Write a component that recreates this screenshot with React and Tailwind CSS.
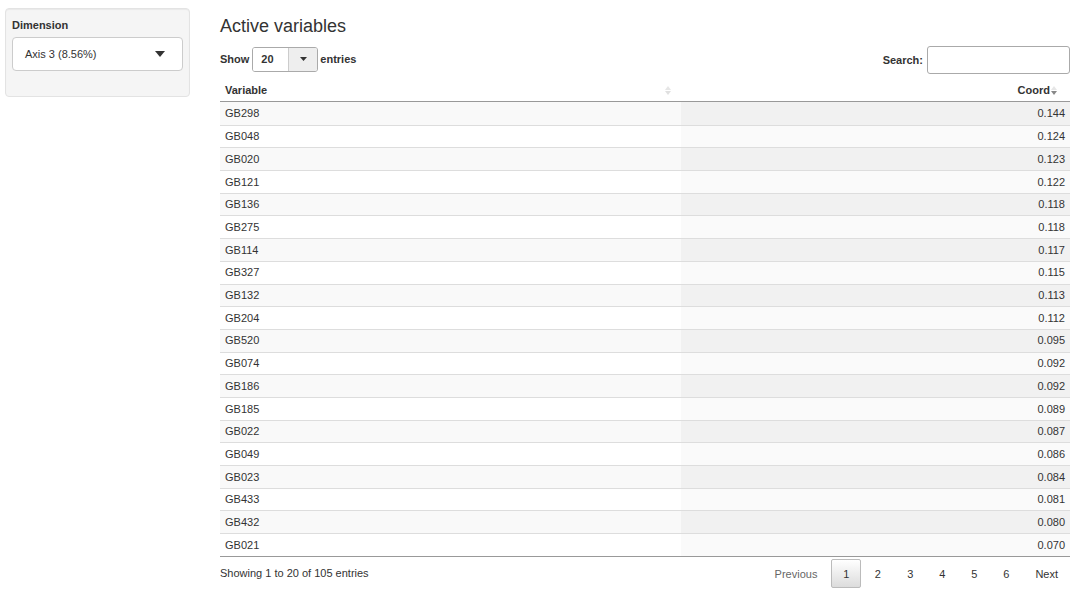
import React from "react";

const rows = [
  ["GB298", "0.144"],
  ["GB048", "0.124"],
  ["GB020", "0.123"],
  ["GB121", "0.122"],
  ["GB136", "0.118"],
  ["GB275", "0.118"],
  ["GB114", "0.117"],
  ["GB327", "0.115"],
  ["GB132", "0.113"],
  ["GB204", "0.112"],
  ["GB520", "0.095"],
  ["GB074", "0.092"],
  ["GB186", "0.092"],
  ["GB185", "0.089"],
  ["GB022", "0.087"],
  ["GB049", "0.086"],
  ["GB023", "0.084"],
  ["GB433", "0.081"],
  ["GB432", "0.080"],
  ["GB021", "0.070"],
];

function SortArrows({ active }) {
  return (
    <span className="flex flex-col items-center gap-[1px] ml-[1px]">
      <svg width="6" height="4" viewBox="0 0 6 4">
        <path d="M3 0 L6 4 L0 4 Z" fill="#e6e6e6" />
      </svg>
      <svg width="6" height="4" viewBox="0 0 6 4">
        <path d="M0 0 L6 0 L3 4 Z" fill={active ? "#888" : "#e0e0e0"} />
      </svg>
    </span>
  );
}

export default function App() {
  return (
    <div
      className="w-[1078px] h-[595px] bg-white text-[#333] overflow-hidden flex"
      style={{ fontFamily: '"Liberation Sans", Arial, sans-serif' }}
    >
      {/* sidebar */}
      <div className="w-[220px] pl-[5px] pt-[8px] shrink-0">
        <div className="w-[185px] h-[89px] bg-[#f5f5f5] border border-[#e3e3e3] rounded-[4px] px-[6px] pt-[9px] shadow-[inset_0_1px_1px_rgba(0,0,0,0.05)]">
          <div className="text-[11px] font-bold leading-[14px]">Dimension</div>
          <div className="mt-[5px] h-[34px] bg-white border border-[#ccc] rounded-[4px] flex items-center justify-between pl-[12px] pr-[17px]">
            <span className="text-[11px]">Axis 3 (8.56%)</span>
            <svg width="10" height="6" viewBox="0 0 10 6">
              <path d="M0 0 L10 0 L5 6 Z" fill="#333" />
            </svg>
          </div>
        </div>
      </div>

      {/* main */}
      <div className="w-[850px] shrink-0 pt-[14px]">
        <h3 className="text-[18px] leading-[24px] text-[#333] font-normal">Active variables</h3>

        <div className="flex items-center justify-between mt-[7px] h-[28px]">
          <div className="flex items-center text-[11px] font-bold">
            <span className="mr-[3px]">Show</span>
            <div className="flex h-[25px] w-[66px] border border-[#aaa] rounded-[3px] overflow-hidden">
              <div className="flex-1 bg-white flex items-center pl-[8px]">20</div>
              <div className="w-[29px] bg-[#eee] border-l border-[#ccc] flex items-center justify-center">
                <svg width="7" height="4" viewBox="0 0 7 4">
                  <path d="M0 0 L7 0 L3.5 4 Z" fill="#333" />
                </svg>
              </div>
            </div>
            <span className="ml-[2px]">entries</span>
          </div>
          <div className="flex items-center text-[11px] font-bold gap-[4px] mt-[2px]">
            <span>Search:</span>
            <div className="w-[143px] h-[28px] border border-[#aaa] rounded-[3px] bg-white" />
          </div>
        </div>

        <div className="mt-[7px]">
          <div className="flex h-[22px] border-b border-[#999] text-[11px] font-bold">
            <div className="w-[461px] flex items-center justify-between pl-[5px] pr-[10px]">
              <span>Variable</span>
              <SortArrows />
            </div>
            <div className="flex-1 flex items-center justify-end pr-[13px]">
              <span>Coord</span>
              <SortArrows active />
            </div>
          </div>
          {rows.map(([v, c], i) => (
            <div
              key={v}
              className={`flex h-[22.7px] text-[11px] ${i > 0 ? "border-t border-[#ddd]" : ""}`}
            >
              <div
                className={`w-[461px] flex items-center pl-[5px] ${i % 2 === 0 ? "bg-[#f9f9f9]" : "bg-white"}`}
              >
                {v}
              </div>
              <div
                className={`flex-1 flex items-center justify-end pr-[5px] ${i % 2 === 0 ? "bg-[#f1f1f1]" : "bg-[#fafafa]"}`}
              >
                {c}
              </div>
            </div>
          ))}
          <div className="border-t border-[#999]" />
        </div>

        <div className="flex items-center justify-between h-[30px] mt-[2px] text-[11px]">
          <span className="-mt-[2px]">Showing 1 to 20 of 105 entries</span>
          <div className="flex items-center">
            <span className="text-[#666] pr-[14px]">Previous</span>
            <span className="w-[30px] h-[29px] border border-[#bbb] rounded-[2px] bg-gradient-to-b from-white to-[#dcdcdc] flex items-center justify-center">
              1
            </span>
            <span className="w-[33px] text-center">2</span>
            <span className="w-[32px] text-center">3</span>
            <span className="w-[32px] text-center">4</span>
            <span className="w-[32px] text-center">5</span>
            <span className="w-[32px] text-center">6</span>
            <span className="pl-[13px] pr-[12px]">Next</span>
          </div>
        </div>
      </div>
    </div>
  );
}
